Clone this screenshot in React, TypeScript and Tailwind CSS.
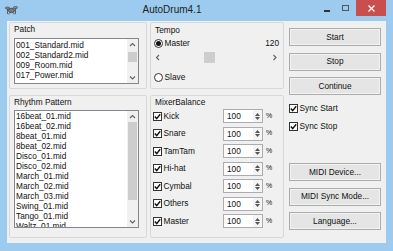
import React from "react";

const Chev = ({ d }: { d: "up" | "down" | "left" | "right" }) => {
  const paths: Record<string, string> = {
    up: "M1 4 L3.5 1.5 L6 4",
    down: "M1 1.5 L3.5 4 L6 1.5",
    left: "M4 1 L1.5 3.5 L4 6",
    right: "M1.5 1 L4 3.5 L1.5 6",
  };
  const vert = d === "up" || d === "down";
  return (
    <svg width={vert ? 7 : 6} height={vert ? 6 : 7} viewBox={vert ? "0 0 7 6" : "0 0 6 7"}>
      <path d={paths[d]} fill="none" stroke="#606060" strokeWidth="1.1" />
    </svg>
  );
};

const Check = ({ checked = true }: { checked?: boolean }) => (
  <div className="w-[9px] h-[9px] border border-[#333] bg-white flex items-center justify-center shrink-0">
    {checked && (
      <svg width="7" height="7" viewBox="0 0 7 7">
        <path d="M0.8 3.6 L2.7 5.6 L6.2 1.2" fill="none" stroke="#111" strokeWidth="1.4" />
      </svg>
    )}
  </div>
);

const Radio = ({ on }: { on?: boolean }) => (
  <div className="w-[9px] h-[9px] rounded-full border border-[#333] bg-white flex items-center justify-center shrink-0">
    {on && <div className="w-[5px] h-[5px] rounded-full bg-[#111]" />}
  </div>
);

const Btn = ({ label }: { label: string }) => (
  <div className="w-[92px] h-[18px] border border-[#acacac] bg-[#e5e5e5] shadow-[inset_0_0_0_1px_#f2f2f2] flex items-center justify-center text-[#111] leading-none">
    {label}
  </div>
);

const patch = ["001_Standard.mid", "002_Standard2.mid", "009_Room.mid", "017_Power.mid"];
const rhythm = [
  "16beat_01.mid",
  "16beat_02.mid",
  "8beat_01.mid",
  "8beat_02.mid",
  "Disco_01.mid",
  "Disco_02.mid",
  "March_01.mid",
  "March_02.mid",
  "March_03.mid",
  "Swing_01.mid",
  "Tango_01.mid",
  "Waltz_01.mid",
];
const mixer = ["Kick", "Snare", "TamTam", "Hi-hat", "Cymbal", "Others", "Master"];

export default function App() {
  return (
    <div className="w-[393px] h-[251px] bg-[#9ccbef] flex flex-col font-['Liberation_Sans',Arial,sans-serif] text-[8.3px] text-[#111] overflow-hidden">
      {/* title bar */}
      <div className="h-[21px] flex items-start relative">
        <div className="ml-[5px] mt-[4px]">
          <svg width="13" height="11" viewBox="0 0 13 11">
            <ellipse cx="6.5" cy="6.5" rx="3" ry="2.2" fill="#7a7a7a" stroke="#333" strokeWidth="0.7" />
            <ellipse cx="2.5" cy="4" rx="2.2" ry="1" fill="#999" stroke="#333" strokeWidth="0.6" />
            <ellipse cx="10.5" cy="3.5" rx="2.2" ry="1" fill="#999" stroke="#333" strokeWidth="0.6" />
            <path d="M2.5 5 V10 M10.5 4.5 V10 M4 9 V10.5 M9 9 V10.5" stroke="#333" strokeWidth="0.7" />
          </svg>
        </div>
        <div className="flex-1 text-center text-[10px] leading-[21px] text-[#222] -mt-[1px] pl-[2px]">AutoDrum4.1</div>
        <div className="flex items-start">
          <div className="w-[6px] h-[1.5px] bg-[#333] mt-[10px] mr-[12px]" />
          <div className="w-[7px] h-[6px] border border-[#555] mt-[5px] mr-[7px]" />
          <div className="w-[30px] h-[16px] bg-[#c94f4f] flex items-center justify-center mr-[7px]">
            <svg width="7" height="7" viewBox="0 0 7 7">
              <path d="M0.5 0.5 L6.5 6.5 M6.5 0.5 L0.5 6.5" stroke="#fff" strokeWidth="1.3" />
            </svg>
          </div>
        </div>
      </div>

      {/* client */}
      <div className="mx-[7px] h-[222px] bg-[#f0f0f0] flex pl-[2px] pt-[1px]">
        {/* left column */}
        <div className="w-[138px] flex flex-col gap-[6px]">
          <div className="h-[67px] border border-[#d8d8d8] rounded-[2px] flex flex-col pl-[4px]">
            <div className="leading-[10px] mt-[1px] ml-[0px]">Patch</div>
            <div className="mt-[4px] w-[125px] h-[46px] border border-[#828790] bg-white flex">
              <div className="flex-1 pl-[1px] pt-[1px] overflow-hidden">
                {patch.map((p) => (
                  <div key={p} className="leading-[10px] h-[10px] whitespace-nowrap">{p}</div>
                ))}
              </div>
              <div className="w-[11px] bg-[#f0f0f0] flex flex-col">
                <div className="h-[11px] flex items-center justify-center"><Chev d="up" /></div>
                <div className="flex-1">
                  <div className="mt-[2px] h-[10px] mx-[1px] bg-[#cdcdcd]" />
                </div>
                <div className="h-[11px] flex items-center justify-center"><Chev d="down" /></div>
              </div>
            </div>
          </div>
          <div className="h-[143px] border border-[#d8d8d8] rounded-[2px] flex flex-col pl-[4px]">
            <div className="leading-[10px] mt-[1px]">Rhythm Pattern</div>
            <div className="mt-[3px] w-[125px] h-[118px] border border-[#828790] bg-white flex">
              <div className="flex-1 pl-[1px] pt-[0px] overflow-hidden">
                {rhythm.map((p) => (
                  <div key={p} className="leading-[10px] h-[10px] whitespace-nowrap">{p}</div>
                ))}
              </div>
              <div className="w-[11px] bg-[#f0f0f0] flex flex-col">
                <div className="h-[11px] flex items-center justify-center"><Chev d="up" /></div>
                <div className="flex-1">
                  <div className="h-[78px] mx-[1px] bg-[#cdcdcd]" />
                </div>
                <div className="h-[11px] flex items-center justify-center"><Chev d="down" /></div>
              </div>
            </div>
          </div>
        </div>

        {/* middle column */}
        <div className="w-[134px] ml-[3px] flex flex-col gap-[6px]">
          <div className="h-[67px] border border-[#d8d8d8] rounded-[2px] flex flex-col">
            <div className="leading-[10px] mt-[2px] pl-[4px]">Tempo</div>
            <div className="mt-[3px] h-[10px] flex items-center pl-[3px] pr-[4px]">
              <Radio on />
              <span className="ml-[1.5px]">Master</span>
              <span className="ml-auto">120</span>
            </div>
            <div className="mt-[4px] h-[11px] ml-[1px] w-[128px] flex">
              <div className="w-[11px] flex items-center justify-center"><Chev d="left" /></div>
              <div className="flex-1">
                <div className="ml-[41px] w-[11px] h-[11px] bg-[#cdcdcd]" />
              </div>
              <div className="w-[11px] flex items-center justify-center"><Chev d="right" /></div>
            </div>
            <div className="mt-[9px] h-[10px] flex items-center pl-[3px]">
              <Radio />
              <span className="ml-[1.5px]">Slave</span>
            </div>
          </div>
          <div className="h-[143px] border border-[#d8d8d8] rounded-[2px] flex flex-col">
            <div className="leading-[10px] mt-[1px] pl-[4px]">MixerBalance</div>
            <div className="mt-[2px] flex flex-col gap-[3.5px] pl-[2px]">
              {mixer.map((m) => (
                <div key={m} className="h-[14px] flex items-center">
                  <div className="w-[70px] flex items-center">
                    <Check />
                    <span className="ml-[1.5px]">{m}</span>
                  </div>
                  <div className="w-[40px] h-[14px] border border-[#abadb3] bg-white flex">
                    <div className="flex-1 pl-[3px] leading-[12px]">100</div>
                    <div className="w-[9px] flex flex-col items-center justify-center gap-[1px] bg-[#f4f4f4]">
                      <svg width="5" height="3" viewBox="0 0 5 3"><path d="M0 3 L2.5 0 L5 3Z" fill="#555" /></svg>
                      <svg width="5" height="3" viewBox="0 0 5 3"><path d="M0 0 L2.5 3 L5 0Z" fill="#555" /></svg>
                    </div>
                  </div>
                  <span className="ml-[3px] text-[7px]">%</span>
                </div>
              ))}
            </div>
          </div>
        </div>

        {/* right column */}
        <div className="ml-[5px] flex flex-col pt-[6px]">
          <div className="flex flex-col gap-[6.5px]">
            <Btn label="Start" />
            <Btn label="Stop" />
            <Btn label="Continue" />
          </div>
          <div className="mt-[8px] h-[10px] flex items-center">
            <Check />
            <span className="ml-[1.5px]">Sync Start</span>
          </div>
          <div className="mt-[8px] h-[10px] flex items-center">
            <Check />
            <span className="ml-[1.5px]">Sync Stop</span>
          </div>
          <div className="mt-[32px] flex flex-col gap-[6.5px]">
            <Btn label="MIDI Device..." />
            <Btn label="MIDI Sync Mode..." />
            <Btn label="Language..." />
          </div>
        </div>
      </div>
    </div>
  );
}
